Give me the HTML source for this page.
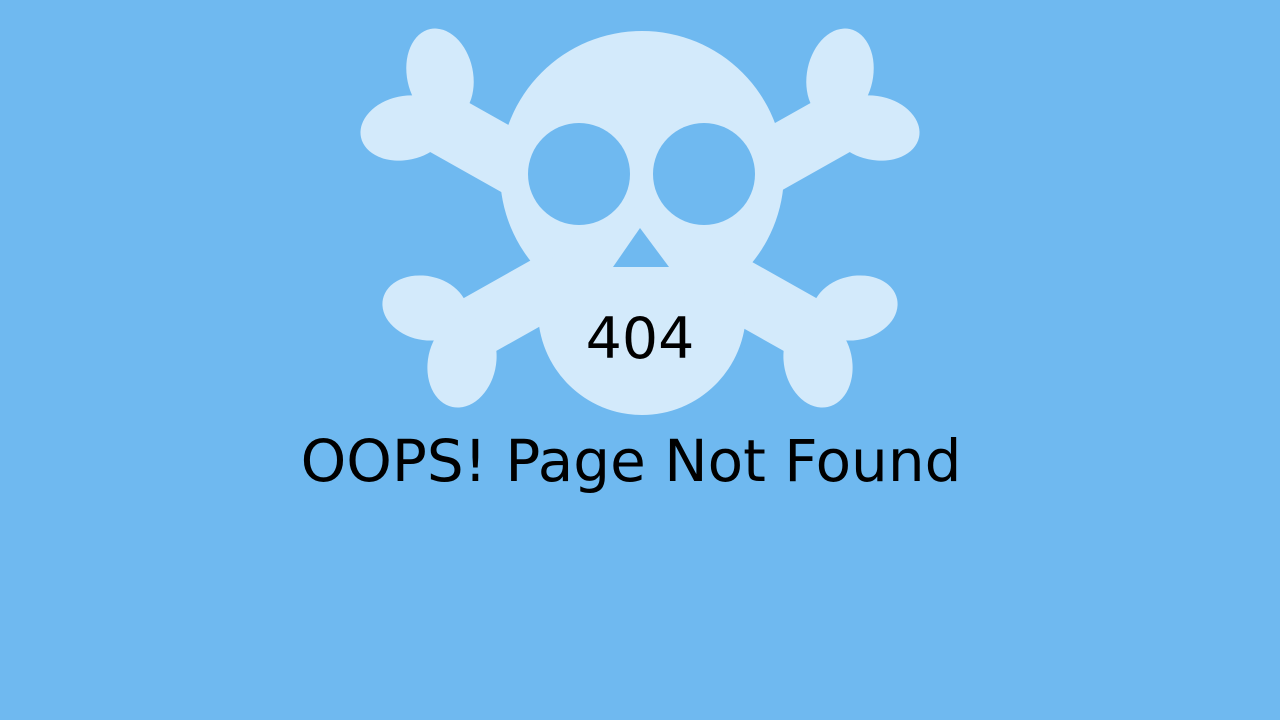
<!DOCTYPE html>
<html><head><meta charset="utf-8"><style>
html,body{margin:0;padding:0;width:1280px;height:720px;background:#6fb9f0;overflow:hidden}
svg{position:absolute;left:0;top:0}
.t{position:absolute;left:0;width:1280px;text-align:center;font-family:"DejaVu Sans","Liberation Sans",sans-serif;color:#000;line-height:1}
</style></head><body>
<svg width="1280" height="720" viewBox="0 0 1280 720">
<g fill="#d3eafb">
<line x1="440" y1="122" x2="840" y2="347" stroke="#d3eafb" stroke-width="62"/>
<line x1="840" y1="122" x2="440" y2="347" stroke="#d3eafb" stroke-width="62"/>
<ellipse cx="440" cy="75" rx="33" ry="47" transform="rotate(-12 440 75)"/>
<ellipse cx="405" cy="128" rx="45" ry="32" transform="rotate(-12 405 128)"/>
<ellipse cx="840" cy="75" rx="33" ry="47" transform="rotate(12 840 75)"/>
<ellipse cx="875" cy="128" rx="45" ry="32" transform="rotate(12 875 128)"/>
<ellipse cx="425" cy="308" rx="43" ry="32" transform="rotate(12 425 308)"/>
<ellipse cx="462" cy="362" rx="34" ry="46" transform="rotate(12 462 362)"/>
<ellipse cx="855" cy="308" rx="43" ry="32" transform="rotate(-12 855 308)"/>
<ellipse cx="818" cy="362" rx="34" ry="46" transform="rotate(-12 818 362)"/>
<circle cx="642" cy="173" r="142"/>
<circle cx="642" cy="311" r="104"/>
</g>
<g fill="#6fb9f0">
<ellipse cx="579" cy="174" rx="51" ry="51"/>
<ellipse cx="704" cy="174" rx="51" ry="51"/>
<polygon points="640,228 613,267 669,267"/>
</g>
</svg>
<div class="t" style="top:311px;font-size:57px">404</div>
<div class="t" style="top:432px;left:-9px;font-size:58px">OOPS! Page Not Found</div>
</body></html>
